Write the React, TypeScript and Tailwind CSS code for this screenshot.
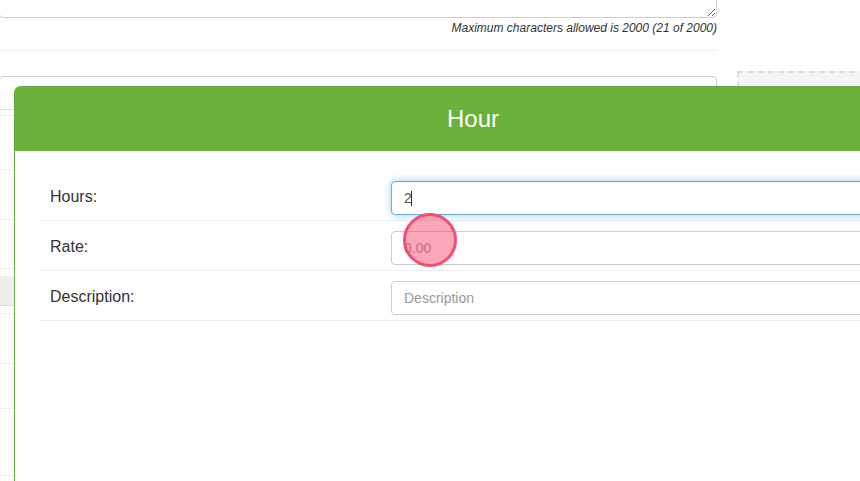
const font = { fontFamily: '"Liberation Sans", Arial, sans-serif' };

// rows of the panel hidden behind the modal
const panelRows = [
  'h-[33px] border-b border-[#ddd]',
  'h-[6px] border-b border-[#eee]',
  'h-[54px] border-b border-[#eee]',
  'h-[50px] border-b border-[#eee]',
  'h-[49px] border-b border-[#eee]',
  'h-[7px]',
  'h-[30px] bg-[#eee] border-b border-[#ddd]',
  'h-[8px] border-b border-[#eee]',
  'h-[50px] border-b border-[#eee]',
  'h-[45px] border-b border-[#eee]',
  'h-[67px] border-b border-[#eee]',
];

function HourRow({ label, children }: { label: string; children: React.ReactNode }) {
  return (
    <div className="flex h-[50px] items-start border-b border-[#eee] pt-[10px]">
      <label className="w-[351px] pl-[10px] pt-[5px] text-base leading-[22px] text-[#333]">{label}</label>
      <div className="relative mr-[10px] flex-1">{children}</div>
    </div>
  );
}

const inputCls =
  'block h-[34px] w-full rounded border bg-white px-3 text-sm text-[#555] outline-none placeholder:text-[#999]';

export default function App() {
  return (
    <div className="relative flex h-[481px] w-[860px] overflow-hidden bg-white" style={font}>
      {/* page behind the modal */}
      <div className="w-[717px] shrink-0">
        <div className="flow-root h-[51px] border-b border-[#eee]">
          <textarea
            readOnly
            className="-ml-px -mt-[22px] block h-[40px] w-[718px] resize rounded border border-[#ccc] outline-none"
          />
          <div className="pt-[2px] text-right text-xs leading-[16px] text-[#333] italic">
            Maximum characters allowed is 2000 (21 of 2000)
          </div>
        </div>
        <div className="-ml-px mt-[25px] h-[420px] rounded border border-[#ccc]">
          {panelRows.map((cls, i) => (
            <div key={i} className={cls} />
          ))}
        </div>
      </div>
      <div className="ml-[20px] flex-1 pt-[71px]">
        <div className="-mr-4 h-[300px] border-2 border-dashed border-[#ddd] bg-[#f5f5f5]" />
      </div>

      {/* modal */}
      <div className="absolute left-[14px] top-[86px] h-[420px] w-[918px] overflow-hidden rounded-t-md border border-[#6aa84f] bg-white">
        <div className="-mx-px -mt-px flex h-[65px] items-center justify-center bg-[#6ab139] text-2xl text-white">Hour</div>
        <div className="px-[25px] pt-[20px]">
          <HourRow label="Hours:">
            <input
              readOnly
              defaultValue="2"
              className={`${inputCls} border-[#66afe9] shadow-[inset_0_1px_1px_rgba(0,0,0,0.075),0_0_8px_rgba(102,175,233,0.6)]`}
            />
            <div className="absolute left-[20px] top-[10px] h-[15px] w-px bg-[#333]" />
          </HourRow>
          <HourRow label="Rate:">
            <input readOnly placeholder="0.00" className={`${inputCls} border-[#ccc]`} />
          </HourRow>
          <HourRow label="Description:">
            <input readOnly placeholder="Description" className={`${inputCls} border-[#ccc]`} />
          </HourRow>
        </div>
      </div>

      {/* click highlight */}
      <div className="absolute left-[403px] top-[213px] h-[54px] w-[54px] rounded-full border-[3px] border-[#f54c72] bg-[#f83c62]/45" />
    </div>
  );
}
